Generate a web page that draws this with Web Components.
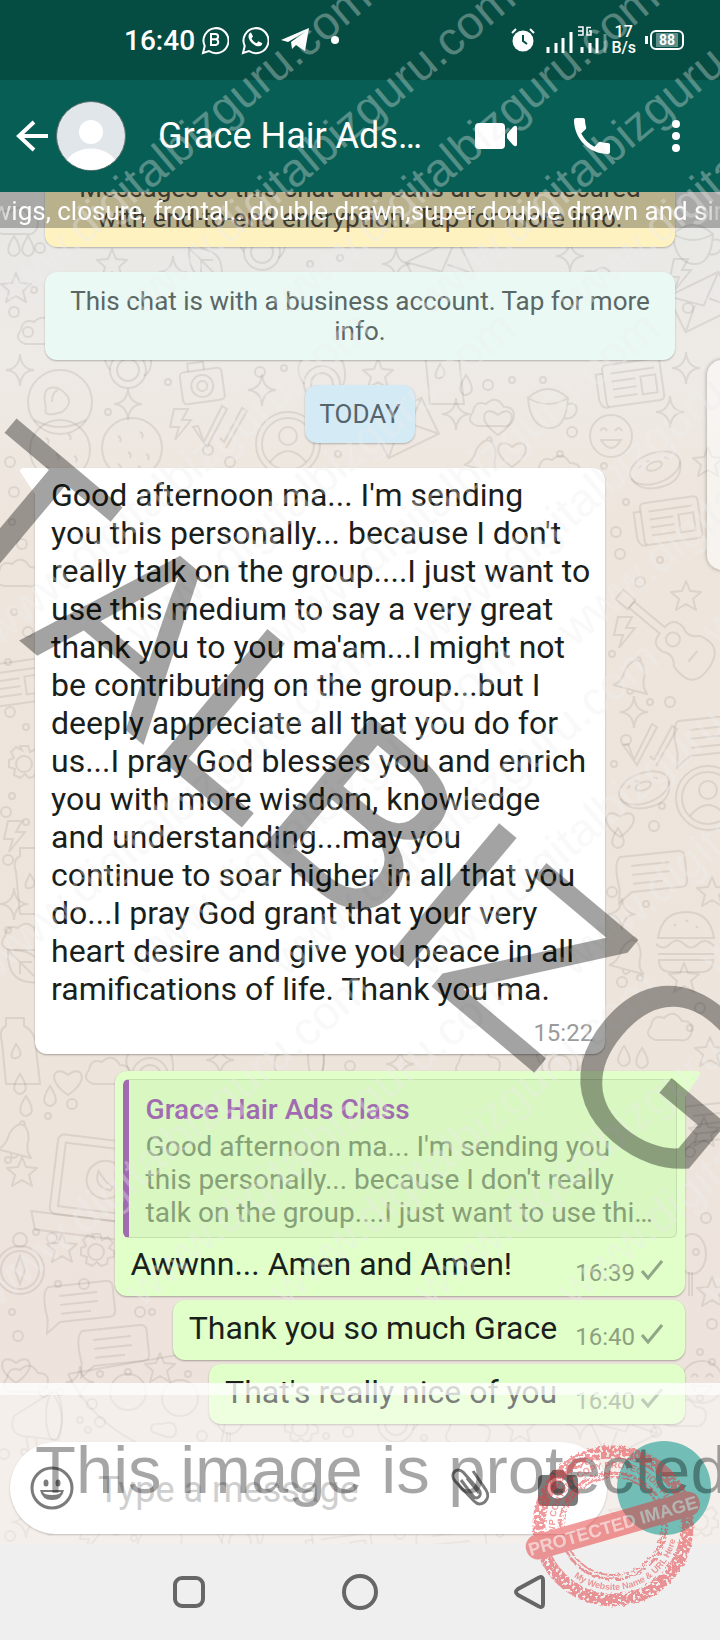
<!DOCTYPE html>
<html lang="en">
<head>
<meta charset="utf-8">
<meta name="viewport" content="width=device-width, initial-scale=1">
<title>Grace Hair Ads Class</title>
<style>
    body {
        margin: 0;
        font-family: Roboto, "Noto Sans", sans-serif;
        background: #efefef;
    }
</style>
</head>
<body>
<chat-screen>
    <status-bar slot="top"></status-bar>
    <chat-header slot="top" name="Grace Hair Ads…"></chat-header>
    <group-ticker slot="ticker">wigs, closure, frontal.. double drawn,super double drawn and sin</group-ticker>

    <chat-notice tone="secure">Messages to this chat and calls are now secured
with end-to-end encryption. Tap for more info.</chat-notice>
    <chat-notice tone="business">This chat is with a business account. Tap for more
info.</chat-notice>
    <chat-notice tone="day">TODAY</chat-notice>
    <chat-bubble kind="in" tail time="15:22">Good afternoon ma... I'm sending
you this personally... because I don't
really talk on the group....I just want to
use this medium to say a very great
thank you to you ma'am...I might not
be contributing on the group...but I
deeply appreciate all that you do for
us...I pray God blesses you and enrich
you with more wisdom, knowledge
and understanding...may you
continue to soar higher in all that you
do...I pray God grant that your very
heart desire and give you peace in all
ramifications of life. Thank you ma.</chat-bubble>
    <chat-bubble kind="out" tail time="16:39"><quoted-message slot="quote" name="Grace Hair Ads Class">Good afternoon ma... I'm sending you
this personally... because I don't really
talk on the group....I just want to use thi…</quoted-message>Awwnn... Amen and Amen!</chat-bubble>
    <chat-bubble kind="out" time="16:40">Thank you so much Grace</chat-bubble>
    <chat-bubble kind="out" time="16:40">That's really nice of you</chat-bubble>

    <message-composer slot="composer"></message-composer>
    <android-nav slot="bottom"></android-nav>
    <water-mark slot="overlay"></water-mark>
</chat-screen>

<script>
function attach(el, html) {
    const root = el.attachShadow({ mode: 'open' });
    root.innerHTML = html;
    return root;
}

class ChatScreen extends HTMLElement {
    constructor() {
        super();
        attach(this, `
            <style>
                :host {
                    display: flex;
                    flex-direction: column;
                    height: 100vh;
                    position: relative;
                    overflow: hidden;
                }
                main {
                    flex: 1;
                    min-height: 0;
                    display: flex;
                    flex-direction: column;
                    position: relative;
                    overflow: hidden;
                    background: linear-gradient(#e7e8e5, #eeeae6 160px, #eee6dd 320px, #ede4dc 900px, #eee3dc);
                }
                chat-wallpaper { position: absolute; inset: 0; }
                .log {
                    flex: 1;
                    min-height: 0;
                    display: flex;
                    flex-direction: column;
                    justify-content: flex-end;
                    padding: 0 35px 17px;
                    position: relative;
                }
                .ticker { position: absolute; top: 0; left: 0; right: 0; }
                .veil {
                    position: absolute;
                    left: 0;
                    right: 0;
                    bottom: 0;
                    height: 149px;
                    border-top: 12px solid rgba(255, 255, 255, 0.82);
                    background: rgba(255, 255, 255, 0.42);
                    background-clip: padding-box;
                }
                .handle {
                    position: absolute;
                    top: 168px;
                    right: -17px;
                    width: 30px;
                    height: 210px;
                    border-radius: 20px;
                    background: rgba(255, 255, 255, 0.5);
                    box-shadow: 0 0 4px rgba(0, 0, 0, 0.35);
                }
            </style>
            <slot name="top"></slot>
            <main>
                <chat-wallpaper></chat-wallpaper>
                <div class="log"><slot></slot></div>
                <div class="ticker"><slot name="ticker"></slot></div>
                <div class="veil"></div>
                <div class="handle"></div>
                <slot name="composer"></slot>
            </main>
            <slot name="bottom"></slot>
            <slot name="overlay"></slot>
        `);
    }
}

class StatusBar extends HTMLElement {
    constructor() {
        super();
        attach(this, `
            <style>
                :host {
                    display: flex;
                    align-items: center;
                    height: 80px;
                    padding: 0 36px 0 124px;
                    background: #054d43;
                    color: #fff;
                }
                .clock { font-size: 28px; font-weight: 500; margin-right: 6px; }
                .icons { display: flex; align-items: center; gap: 12px; flex: 1; }
                .right { display: flex; align-items: center; }
                .rate { margin: 0 14px 0 4px; font-size: 16px; line-height: 16px; text-align: center; font-weight: 500; }
                .alarm { margin-right: 10px; }
                svg { display: block; }
                .battery {
                    box-sizing: border-box;
                    width: 34px;
                    height: 20px;
                    border: 2px solid #fff;
                    border-radius: 6px;
                    padding: 1px 4px;
                    display: flex;
                    position: relative;
                }
                .battery::before {
                    content: "";
                    position: absolute;
                    left: -7px;
                    top: 4px;
                    width: 3px;
                    height: 8px;
                    background: #fff;
                }
                .battery span {
                    flex: 1;
                    background: #5f8d87;
                    font: bold 14px/14px Roboto, sans-serif;
                    text-align: center;
                }
            </style>
            <span class="clock">16:40</span>
            <div class="icons">
                <svg width="28" height="30" viewBox="0 0 28 30" fill="none" stroke="#fff" stroke-width="2">
                    <path d="M2 28l1.700-7A12.500 12.500 0 1 1 8 26z"/>
                    <path d="M10 9v11h5a3 3 0 0 0 0-5.800h-5h4.500a2.600 2.600 0 0 0 0-5.200z"/>
                </svg>
                <svg width="28" height="30" viewBox="0 0 28 30">
                    <path d="M2 28l1.700-7A12.500 12.500 0 1 1 8 26z" fill="none" stroke="#fff" stroke-width="2"/>
                    <path d="M10 7.500c-1 .2-2.500 1.500-2.500 3.800 0 4.500 5.500 10 10.200 10 2 0 3.500-1.300 3.600-3.100l-3.800-2-2 2c-2-.8-4.200-3-5-5l1.500-1.700z" fill="#fff"/>
                </svg>
                <svg width="28" height="26" viewBox="0 0 28 26"><path d="M0 13L28 1l-4 23-9-6-4 4-1-7L24 5 7 15z" fill="#fff"/></svg>
                <svg width="36" height="8"><circle cx="14" cy="4" r="4" fill="#fff"/></svg>
            </div>
            <div class="right">
                <svg class="alarm" width="24" height="24" viewBox="0 0 24 24">
                    <circle cx="12" cy="13" r="10.500" fill="#fff"/>
                    <path d="M12 7v6l4 3" fill="none" stroke="#054d43" stroke-width="2"/>
                    <path d="M1 5l4-4M19 1l4 4" stroke="#fff" stroke-width="2"/>
                </svg>
                <svg width="62" height="28" viewBox="0 0 62 28">
                    <path d="M3 27v-6M11 27V17M18 27V12M26 27V6M37 27v-6M45 27V17M52 27V12" stroke="#fff" stroke-width="3"/>
                    <path d="M60 27V8" stroke="#5f8d87" stroke-width="3"/>
                    <path d="M33 1h5v8h-5M33 5h5M46 1.500h-4V9h4V5h-2" fill="none" stroke="#fff" stroke-width="1.500"/>
                </svg>
                <div class="rate">17<br>B/s</div>
                <div class="battery"><span>88</span></div>
            </div>
        `);
    }
}

class ChatHeader extends HTMLElement {
    constructor() {
        super();
        attach(this, `
            <style>
                :host {
                    display: flex;
                    align-items: center;
                    height: 112px;
                    padding: 0 35px 0 16px;
                    background: #075e54;
                    color: #fff;
                }
                button {
                    border: 0;
                    padding: 0;
                    background: none;
                    display: block;
                }
                svg { display: block; }
                .avatar { margin: 0 32px 0 8px; }
                h1 { flex: 1; margin: 0; font-size: 36px; line-height: 48px; font-weight: 400; white-space: nowrap; }
                nav { display: flex; align-items: center; gap: 57px; }
            </style>
            <button aria-label="Back"><svg width="32" height="32" viewBox="0 0 32 32" fill="none" stroke="#fff" stroke-width="4"><path d="M18 2L3 16l15 14M3 16h29"/></svg></button>
            <svg class="avatar" width="70" height="70" viewBox="0 0 70 70">
                <clipPath id="c"><circle cx="35" cy="35" r="34"/></clipPath>
                <circle cx="35" cy="35" r="34.500" fill="#e1e6ea" stroke="#5d6f6e"/>
                <g clip-path="url(#c)" fill="#fff"><circle cx="35" cy="31" r="12"/><ellipse cx="35" cy="66" rx="26" ry="18.500"/></g>
            </svg>
            <h1></h1>
            <nav>
                <button aria-label="Video call"><svg width="42" height="26" viewBox="0 0 42 26" fill="#fff"><rect width="30" height="26" rx="4"/><path d="M32 11l6-7q4-3 4 1v16q0 4-4 1l-6-7z"/></svg></button>
                <button aria-label="Call"><svg width="36" height="36" viewBox="3 3 18 18" fill="#fff"><path d="M6.620 10.790c1.440 2.830 3.760 5.140 6.590 6.590l2.200-2.200c.27-.27.67-.36 1.020-.24 1.120.37 2.330.57 3.570.57.550 0 1 .45 1 1V20c0 .55-.45 1-1 1-9.390 0-17-7.610-17-17 0-.55.45-1 1-1h3.500c.55 0 1 .45 1 1 0 1.250.2 2.450.57 3.570.11.35.03.74-.25 1.020l-2.200 2.200z"/></svg></button>
                <button aria-label="More options"><svg width="18" height="32" viewBox="0 0 18 32" fill="#fff"><circle cx="9" cy="4" r="4"/><circle cx="9" cy="16" r="4"/><circle cx="9" cy="28" r="4"/></svg></button>
            </nav>
        `);
    }

    connectedCallback() {
        this.shadowRoot.querySelector('h1').textContent = this.getAttribute('name');
    }
}

class GroupTicker extends HTMLElement {
    constructor() {
        super();
        attach(this, `
            <style>
                :host {
                    display: flex;
                    justify-content: center;
                    height: 36px;
                    background: rgba(0, 0, 0, 0.27);
                    color: #fff;
                    font-size: 26px;
                    line-height: 38px;
                    white-space: nowrap;
                    overflow: hidden;
                }
                span { mask-image: linear-gradient(90deg, transparent, #000 24px, #000 calc(100% - 30px), transparent); }
            </style>
            <span><slot></slot></span>
        `);
    }
}

class ChatNotice extends HTMLElement {
    constructor() {
        super();
        attach(this, `
            <style>
                :host {
                    display: block;
                    flex: none;
                    margin: 0 10px 25px;
                    padding: 14px 16px;
                    border-radius: 12px;
                    box-shadow: 0 1px 2px rgba(0, 0, 0, 0.25);
                    font-size: 26px;
                    line-height: 30px;
                    text-align: center;
                    color: #5b6764;
                    background: #eaf9f4;
                }
                :host([tone="secure"]) { background: #fef2c1; color: #55503f; }
                :host([tone="day"]) {
                    align-self: center;
                    padding: 14px;
                    background: #d4eaf5;
                    color: #56646b;
                }
                span { white-space: pre-line; }
            </style>
            <span><slot></slot></span>
        `);
    }
}

class ChatBubble extends HTMLElement {
    constructor() {
        super();
        this.root = attach(this, `
            <style>
                :host {
                    display: flow-root;
                    flex: none;
                    position: relative;
                    align-self: flex-end;
                    margin-bottom: 4px;
                    border-radius: 12px;
                    background: #e1ffc8;
                    box-shadow: 0 1px 2px rgba(0, 0, 0, 0.3);
                    color: #1b1f1c;
                    font-size: 32px;
                    line-height: 38px;
                }
                :host(:last-of-type) { margin-bottom: 0; }
                :host([kind="in"]) {
                    align-self: flex-start;
                    margin-bottom: 17px;
                    background: #fff;
                }
                .body {
                    display: flex;
                    justify-content: space-between;
                    gap: 18px;
                    padding: 9px 22px 9px 16px;
                }
                .text { white-space: pre; padding-bottom: 4px; }
                .meta {
                    display: flex;
                    align-self: flex-end;
                    gap: 6px;
                    font-size: 24px;
                    line-height: 28px;
                    color: #8da182;
                }
                :host([kind="in"]) .body { flex-direction: column; gap: 7px; padding: 8px 12px 7px 16px; }
                :host([kind="in"]) .text { padding-right: 3px; }
                :host([kind="in"]) .meta { color: #9b9b9b; }
                :host([kind="in"]) .check { display: none; }
                .check { display: block; margin-top: 1px; }
                .tail { display: none; position: absolute; top: 0; }
                :host([tail]) .tail { display: block; right: -15px; color: #e1ffc8; }
                :host([tail][kind="in"]) .tail { right: auto; left: -15px; color: #fff; transform: scaleX(-1); }
            </style>
            <svg class="tail" width="27" height="26" fill="currentColor"><path d="M0 0h24q5 1 2 5L12 26H0z"/></svg>
            <slot name="quote"></slot>
            <div class="body">
                <div class="text"><slot></slot></div>
                <div class="meta"><span class="time"></span><svg class="check" width="22" height="20" fill="none" stroke="#90a787" stroke-width="3"><path d="M1 11l6 7L21 1"/></svg></div>
            </div>
        `);
    }

    connectedCallback() {
        this.root.querySelector('.time').textContent = this.getAttribute('time');
    }
}

class QuotedMessage extends HTMLElement {
    constructor() {
        super();
        attach(this, `
            <style>
                :host {
                    display: block;
                    box-sizing: border-box;
                    margin: 8px 8px -2px;
                    position: relative;
                    border: 1px solid #c3e0ae;
                    border-left: 6px solid #a06bb0;
                    border-radius: 6px;
                    padding: 10px 23px 8px 17px;
                    background: #d9f7c0;
                    font-size: 28px;
                    line-height: 33px;
                    color: #86a078;
                }
                strong { display: block; font-weight: 500; color: #a06bb0; line-height: 40px; }
                .text { white-space: pre; }
            </style>
            <strong></strong>
            <div class="text"><slot></slot></div>
        `);
    }

    connectedCallback() {
        this.shadowRoot.querySelector('strong').textContent = this.getAttribute('name');
    }
}

class MessageComposer extends HTMLElement {
    constructor() {
        super();
        attach(this, `
            <style>
                :host {
                    display: flex;
                    justify-content: space-between;
                    align-items: center;
                    position: relative;
                    padding: 0 9px 9px 10px;
                }
                .field {
                    flex: 1;
                    min-width: 0;
                    height: 92px;
                    display: flex;
                    align-items: center;
                    padding: 0 29px 0 20px;
                    margin-right: 10px;
                    box-sizing: border-box;
                    border-radius: 46px;
                    background: #fff;
                    box-shadow: 0 1px 2px rgba(0, 0, 0, 0.2);
                }
                input {
                    flex: 1;
                    min-width: 0;
                    border: 0;
                    outline: 0;
                    padding: 4px 0 0 24px;
                    background: none;
                    font: 36px Roboto, sans-serif;
                }
                input::placeholder { color: #cfcfcf; opacity: 1; }
                button { border: 0; padding: 0; background: none; display: block; }
                .attach { margin-right: 46px; }
                .mic {
                    width: 94px;
                    height: 94px;
                    border-radius: 50%;
                    background: #72bdb6;
                }
                svg { display: block; }
            </style>
            <div class="field">
                <button aria-label="Emoji"><svg width="44" height="44" viewBox="0 0 44 44">
                    <circle cx="22" cy="22" r="20" fill="none" stroke="#7b7b7b" stroke-width="3"/>
                    <ellipse cx="16" cy="17" rx="2.500" ry="3.500" fill="#7b7b7b"/><ellipse cx="28" cy="17" rx="2.500" ry="3.500" fill="#7b7b7b"/>
                    <path d="M10 24h24q-2 10-12 10T10 24z" fill="#7b7b7b"/><path d="M13 26h18q-1 3-9 3t-9-3z" fill="#fff"/>
                </svg></button>
                <input type="text" placeholder="Type a message" aria-label="Type a message">
                <button class="attach" aria-label="Attach"><svg width="44" height="42" viewBox="0 0 44 42" fill="none" stroke="#7b7b7b" stroke-width="3">
                    <path d="M25 4l13 19c6 9-5 19-12 11L7 14C1 7 9-1 15 5l16 18c4 5-2 11-6 6L13 13M19 11l12 15"/>
                </svg></button>
                <button aria-label="Camera"><svg width="40" height="38" viewBox="0 0 40 38">
                    <path d="M5 6h6l4-5h10l4 5h6q5 0 5 5v20q0 6-6 6H6q-6 0-6-6V11q0-5 5-5z" fill="#7b7b7b"/>
                    <circle cx="20" cy="19" r="9" fill="none" stroke="#fff" stroke-width="3"/>
                </svg></button>
            </div>
            <button class="mic" aria-label="Voice message"></button>
        `);
    }
}

class AndroidNav extends HTMLElement {
    constructor() {
        super();
        attach(this, `
            <style>
                :host {
                    display: flex;
                    justify-content: center;
                    align-items: center;
                    gap: 136px;
                    height: 96px;
                    background: #efefef;
                }
                button { border: 0; padding: 0; background: none; display: block; }
                svg { display: block; fill: none; stroke: #666; stroke-width: 4; }
            </style>
            <button aria-label="Recent apps"><svg width="34" height="36"><rect x="3" y="4" width="28" height="28" rx="7"/></svg></button>
            <button aria-label="Home"><svg width="36" height="36"><circle cx="18" cy="18" r="16"/></svg></button>
            <button aria-label="Back"><svg width="34" height="36"><path d="M25 3.500Q29 2 29 6v24q0 4-4 2.500L4 21q-4-3 0-6z"/></svg></button>
        `);
    }
}

// line drawings, each around its own origin
const DOODLES = {
    o: '<circle r="5"/>',
    dot: '<circle r="3"/>',
    drop: '<path d="M0-10Q9 4 4 8T-4 8Q-9 4 0-10z"/>',
    star: '<path d="M0-15l4 10 11 1-8 7 3 11-10-6-10 6 3-11-8-7 11-1z" stroke-linejoin="round"/>',
    spark: '<path d="M0-16Q1-1 14 0 1 1 0 16-1 1-14 0-1-1 0-16z"/>',
    heart: '<path d="M0 13C-24-3-12-18 0-7 12-18 24-3 0 13z"/>',
    smile: '<circle r="21"/><path d="M-11-5q4-6 7 0M4-5q4-6 7 0M-10 4q10 16 20 0z"/>',
    camera: '<g transform="rotate(-8)"><rect x="-21" y="-14" width="42" height="32" rx="4"/><path d="M-12-14v-8h16v8"/><circle r="11" cy="2"/><circle r="5" cy="2"/></g>',
    cup: '<path d="M-22-8q20-18 40 0-2 32-20 30T-22-8q20 12 40 0M18-2c14-4 10 18-4 14"/>',
    cloud: '<path d="M-16 12q-13-4-5-14 2-12 13-8 10-10 18 3 13 0 9 13-3 8-12 6z"/>',
    cookie: '<circle r="30"/><path d="M-14-12q4 2 2 6M8-16q4 2 2 6M-4 4q4 2 2 6M14 6q4 2 2 6M-14 16q4 2 2 6M6 18q4 2 2 6"/>',
    user: '<circle r="32"/><circle r="26"/><circle cy="-8" r="9"/><path d="M-18 18q18-22 36 0"/>',
    planet: '<circle r="32"/><path d="M-14 6q-6-24 12-20 20 12 4 24-20 6-16-4M-8 0q0-10 6-12M-26 18q26 14 52 0"/>',
    mail: '<g transform="rotate(-26)"><path d="M-28-20h56v40h-56zL0 4l28-24M-28 20l20-20M28 20L8 0"/></g>',
    checks: '<path d="M-22 2l6 16L2-18l5 3-20 38-14-20zM0 14l4 4L22-16l5 3L6 24"/>',
    donut: '<g transform="rotate(-20)"><ellipse rx="26" ry="15"/><ellipse cy="-2" rx="8" ry="4"/><path d="M-26 2q4 16 26 18T26 2M-16-5l4-2M-6-9l4 1M12-7l4 3"/></g>',
    news: '<g transform="rotate(-8)"><rect x="-26" y="-20" width="58" height="42" rx="4"/><path d="M-26-12h-7v26q2 10 9 8M-18-11h44M-18-3h24M-18 5h24M-18 13h24"/><rect x="11" y="-4" width="15" height="18"/></g>',
    guitar: '<g transform="rotate(-50)"><path d="M-4-58h8v40q14 0 12 14-6 10 4 18 8 26-20 28T-20 14q10-8 4-18-2-14 12-14z"/><circle cy="-4" r="7"/><path d="M-7 22H7M-6-74H6v16H-6z"/></g>',
    bell: '<g transform="rotate(15)"><path d="M-18 14q8-4 8-18 4-12 10-12t10 12q0 14 8 18zM-4 14q4 9 8 0M-3-16q3-7 6 0"/></g>',
    bolt: '<path d="M-6-15H8L2-4h9L-5 16l4-13h-9z"/>',
    burger: '<path d="M-28-4q4-26 28-26T28-4zM-30 2q7 7 14 0t14 0 14 0 16 2M-28 12h56M-27 18q0 12 12 12h30q12 0 12-12zM-12-18l2 2M0-22l2 2M10-16l2 2"/>',
    bubble: '<g transform="rotate(-6)"><path d="M-28-18h58q6 0 6 6v24q0 6-6 6h-50l-14 10 2-14q-4-28 4-32zM-18-8h38M-18 1h38M-18 10h30"/></g>',
    laptop: '<g transform="rotate(7)"><rect x="-38" y="-54" width="100" height="80" rx="6"/><rect x="-30" y="-46" width="84" height="64"/><path d="M-56 26H80l-6 18h-124z"/><circle cx="14" cy="-14" r="19"/><path d="M6-22q-4 16 14 18l2-4-6-3-6-6z"/></g>',
    compass: '<circle r="24"/><circle r="19"/><circle cy="-30" r="7"/><path d="M0-14l5 14-5 14-5-14z"/>',
    horn: '<path d="M-24-4L14-28q16 22 6 48l-36-4q-14-4-8-20zM-12 16l4 22h8l-2-20"/><ellipse cx="16" cy="-4" rx="8" ry="24"/>',
    gear: '<circle r="8"/><path d="M-4-18h8l2 6 6-3 5 6-4 5 5 3v6l-6 1-1 6-6 2-4-4-5 4-6-3 1-6-6-2v-7l5-2-3-6 5-5 6 3z"/>',
    leaf: '<path d="M-16-14Q22-16 16 18-18 22-16-14L10 12M-4-2v12M-4-2H8"/>',
    pop: '<path d="M0 34V10M-3 34V10"/><ellipse rx="14" ry="20" cy="-8"/>',
    pizza: '<path d="M-90-40Q-50 40 60 50L70-10M-90-40l150-26"/><circle r="18" cx="-30" cy="-22"/><circle r="18" cx="22" cy="-16"/><path d="M-6 18q-4-10 10-8 14-4 14 6t-12 6-12-4z"/>',
    swirl: '<circle r="18"/><circle r="11"/><path d="M-18 0q-14-20 6-30 30-6 34 12 4 18-6 24"/>',
    bottle: '<path d="M-10-24h18v8q12 6 12 22l4 36h-34L-14 0q-4-12 4-16z"/><path d="M0 2q9 12 0 14T0 2z"/>'
};

// [doodle, x, y] over the wallpaper
const SPOTS = [
    ['cloud', 18, 30], ['cup', 695, 50], ['drop', 14, 54], ['drop', 28, 54], ['o', 40, 56], ['star', 112, 72], ['leaf', 205, 70], ['spark', 173, 80],
    ['swirl', 262, 60], ['dot', 310, 72], ['dot', 340, 66], ['spark', 396, 72], ['mail', 440, 76], ['spark', 570, 64], ['cloud', 602, 90], ['bolt', 680, 82],
    ['star', 16, 96], ['dot', 34, 98], ['o', 14, 120], ['o', 28, 140], ['cloud', 42, 140], ['spark', 20, 178], ['o', 688, 116], ['spark', 686, 176], ['mail', 702, 110],
    ['swirl', 128, 178], ['camera', 202, 192], ['planet', 60, 210], ['dot', 168, 190], ['o', 260, 180], ['spark', 262, 198], ['dot', 284, 176], ['swirl', 322, 192], ['star', 378, 182],
    ['mail', 405, 236], ['drop', 466, 193], ['o', 488, 193], ['bottle', 440, 170], ['dot', 512, 188], ['dot', 543, 188], ['cup', 550, 214], ['news', 630, 190], ['spark', 670, 220],
    ['spark', 128, 212], ['dot', 108, 220], ['checks', 220, 232], ['bolt', 180, 232], ['user', 288, 252], ['spark', 456, 222], ['heart', 498, 230], ['cloud', 494, 222], ['o', 572, 240],
    ['cookie', 132, 256], ['cookie', 60, 258], ['o', 208, 258], ['o', 230, 270], ['dot', 338, 262], ['heart', 512, 262], ['bell', 485, 264], ['smile', 611, 244], ['donut', 655, 276],
    ['star', 708, 270], ['dot', 604, 274], ['o', 10, 270], ['dot', 560, 262], ['cloud', 560, 278],
    ['o', 14, 300], ['dot', 12, 330], ['o', 22, 352], ['cloud', 20, 382], ['dot', 14, 420], ['o', 28, 440], ['dot', 8, 470], ['news', 14, 490], ['o', 10, 520], ['dot', 26, 535],
    ['gear', 24, 572], ['dot', 12, 604], ['o', 6, 620], ['bolt', 14, 644], ['dot', 26, 630], ['bottle', 30, 680], ['o', 8, 668], ['spark', 14, 712], ['dot', 8, 738], ['leaf', 24, 772], ['cloud', 26, 746], ['bottle', 16, 850],
    ['news', 668, 328], ['o', 616, 340], ['dot', 626, 310], ['o', 620, 362], ['dot', 660, 368], ['star', 686, 404], ['o', 640, 390], ['guitar', 676, 450], ['bolt', 624, 440], ['dot', 612, 462],
    ['bell', 634, 484], ['o', 670, 510], ['dot', 650, 510], ['spark', 634, 520], ['checks', 650, 550], ['bubble', 708, 544], ['o', 626, 548], ['dot', 614, 572], ['donut', 644, 596], ['user', 708, 606],
    ['dot', 662, 614], ['drop', 618, 646], ['o', 654, 634], ['heart', 620, 632], ['bubble', 650, 680], ['o', 612, 700], ['star', 712, 700], ['burger', 686, 750], ['dot', 646, 712], ['spark', 622, 722],
    ['bell', 630, 764], ['o', 622, 790], ['dot', 640, 786], ['star', 684, 786], ['cloud', 672, 836], ['drop', 624, 864], ['drop', 642, 866], ['dot', 690, 836], ['o', 700, 816], ['star', 710, 860],
    ['drop', 20, 892], ['drop', 50, 904], ['heart', 68, 890], ['drop', 26, 914], ['dot', 48, 924], ['cloud', 110, 880], ['o', 72, 912], ['swirl', 150, 884], ['spark', 220, 868], ['horn', 300, 868], ['o', 350, 874], ['spark', 400, 872], ['cloud', 480, 872], ['swirl', 560, 874],
    ['bell', 18, 948], ['laptop', 90, 1000], ['star', 22, 980], ['dot', 8, 968], ['dot', 36, 1040], ['o', 52, 1046], ['compass', 20, 1078], ['star', 62, 1056], ['gear', 96, 1060], ['dot', 58, 1092], ['o', 84, 1092],
    ['bubble', 78, 1110], ['dot', 12, 1120], ['o', 18, 1144], ['bubble', 112, 1154], ['heart', 16, 1178], ['o', 140, 1120], ['dot', 152, 1120], ['o', 44, 1200], ['dot', 60, 1200], ['star', 160, 1176],
    ['star', 704, 940], ['o', 690, 960], ['bubble', 712, 930], ['pop', 692, 1070], ['o', 706, 1026], ['dot', 696, 1060], ['star', 712, 1100], ['o', 712, 1132], ['dot', 700, 1160], ['smile', 702, 1190], ['dot', 712, 1170],
    ['cloud', 28, 1188], ['horn', 38, 1228], ['spark', 80, 1190], ['pizza', 158, 1222], ['dot', 100, 1182], ['dot', 128, 1180], ['dot', 188, 1182], ['o', 92, 1212], ['o', 100, 1230], ['dot', 80, 1228], ['dot', 88, 1238],
    ['o', 4, 1262], ['dot', 24, 1260], ['o', 202, 1244], ['pop', 230, 1230], ['gear', 300, 1236], ['dot', 326, 1244], ['o', 348, 1240], ['swirl', 396, 1232], ['dot', 424, 1246], ['cloud', 470, 1240], ['star', 520, 1236], ['spark', 580, 1232],
    ['mail', 624, 1236], ['o', 656, 1240], ['cloud', 686, 1222], ['dot', 700, 1206], ['spark', 26, 1330], ['o', 10, 1344], ['dot', 50, 1340], ['bolt', 90, 1344], ['dot', 116, 1340], ['cloud', 162, 1346], ['dot', 134, 1346],
    ['swirl', 240, 1350], ['news', 340, 1356], ['o', 400, 1342], ['bubble', 450, 1350], ['dot', 500, 1342], ['star', 624, 1322], ['gear', 700, 1330], ['dot', 660, 1340], ['o', 640, 1290]
];

class ChatWallpaper extends HTMLElement {
    constructor() {
        super();
        const defs = Object.entries(DOODLES).map(([id, d]) => `<g id="${id}">${d}</g>`).join('');
        const uses = SPOTS.map(([id, x, y]) => `<use href="#${id}" x="${x}" y="${y}"/>`).join('');
        attach(this, `
            <style>
                :host { display: block; }
                svg { display: block; width: 100%; height: 100%; fill: none; stroke: rgba(90, 85, 75, 0.12); stroke-width: 2; }
            </style>
            <svg aria-hidden="true"><defs>${defs}</defs>${uses}</svg>
        `);
    }
}

class WaterMark extends HTMLElement {
    constructor() {
        super();
        const lines = [];
        for (let y = 318; y <= 1308; y += 330) {
            for (let x = -2; x < 720; x += 144) {
                lines.push(`<text transform="translate(${x} ${y}) rotate(-40)">www.digitalbizguru.com</text>`);
            }
        }
        attach(this, `
            <style>
                :host { position: absolute; inset: 0; overflow: hidden; pointer-events: none; }
                svg { display: block; width: 100%; height: 100%; font-family: "Liberation Sans", Arial, sans-serif; }
                .site { font-size: 47px; fill: rgba(238, 238, 238, 0.34); }
                .big { font-size: 245px; fill: rgba(0, 0, 0, 0.36); font-kerning: none; }
                .note { font-size: 67px; fill: rgba(0, 0, 0, 0.35); }
                .stamp { opacity: 0.5; fill: #e5393c; font-weight: bold; }
            </style>
            <svg>
                <defs>
                    <filter id="rough" x="-10%" y="-10%" width="120%" height="120%">
                        <feTurbulence type="fractalNoise" baseFrequency="0.3" numOctaves="2" seed="4" result="n"/>
                        <feDisplacementMap in="SourceGraphic" in2="n" scale="5" result="d"/>
                        <feColorMatrix in="n" type="matrix" values="0 0 0 0 0  0 0 0 0 0  0 0 0 0 0  0 -14 0 0 8.800" result="m"/>
                        <feComposite in="d" in2="m" operator="in"/>
                    </filter>
                    <path id="top" d="M-58 0A58 58 0 0 1 58 0"/>
                    <path id="low" d="M-64 0A64 64 0 0 0 64 0"/>
                </defs>
                <g class="site">${lines.join('')}</g>
                <text class="big" transform="translate(-96 544) rotate(40)">TALBIZG</text>
                <text class="note" x="35" y="1493">This image is protected</text>
                <g class="stamp" transform="translate(613 1526)">
                    <g fill="none" stroke="#e5393c" filter="url(#rough)">
                        <circle r="74" stroke-width="13"/>
                        <circle r="53" stroke-width="3"/>
                        <circle r="49" stroke-width="2"/>
                    </g>
                    <text font-size="9" transform="rotate(-8)"><textPath href="#top">WP CONTENT COPY PROTECTION PLUGIN</textPath></text>
                    <text font-size="9" transform="rotate(-20)"><textPath href="#low" startOffset="50%" text-anchor="middle">My Website Name &amp; URL Here</textPath></text>
                    <g transform="rotate(-16)">
                        <rect x="-90" y="-13" width="180" height="25" rx="12"/>
                        <text y="6" font-size="18" text-anchor="middle" fill="#fff" fill-opacity="0.6">PROTECTED IMAGE</text>
                    </g>
                </g>
            </svg>
        `);
    }
}

customElements.define('chat-wallpaper', ChatWallpaper);
customElements.define('chat-screen', ChatScreen);
customElements.define('status-bar', StatusBar);
customElements.define('chat-header', ChatHeader);
customElements.define('group-ticker', GroupTicker);
customElements.define('chat-notice', ChatNotice);
customElements.define('chat-bubble', ChatBubble);
customElements.define('quoted-message', QuotedMessage);
customElements.define('message-composer', MessageComposer);
customElements.define('android-nav', AndroidNav);
customElements.define('water-mark', WaterMark);
</script>
</body>
</html>
